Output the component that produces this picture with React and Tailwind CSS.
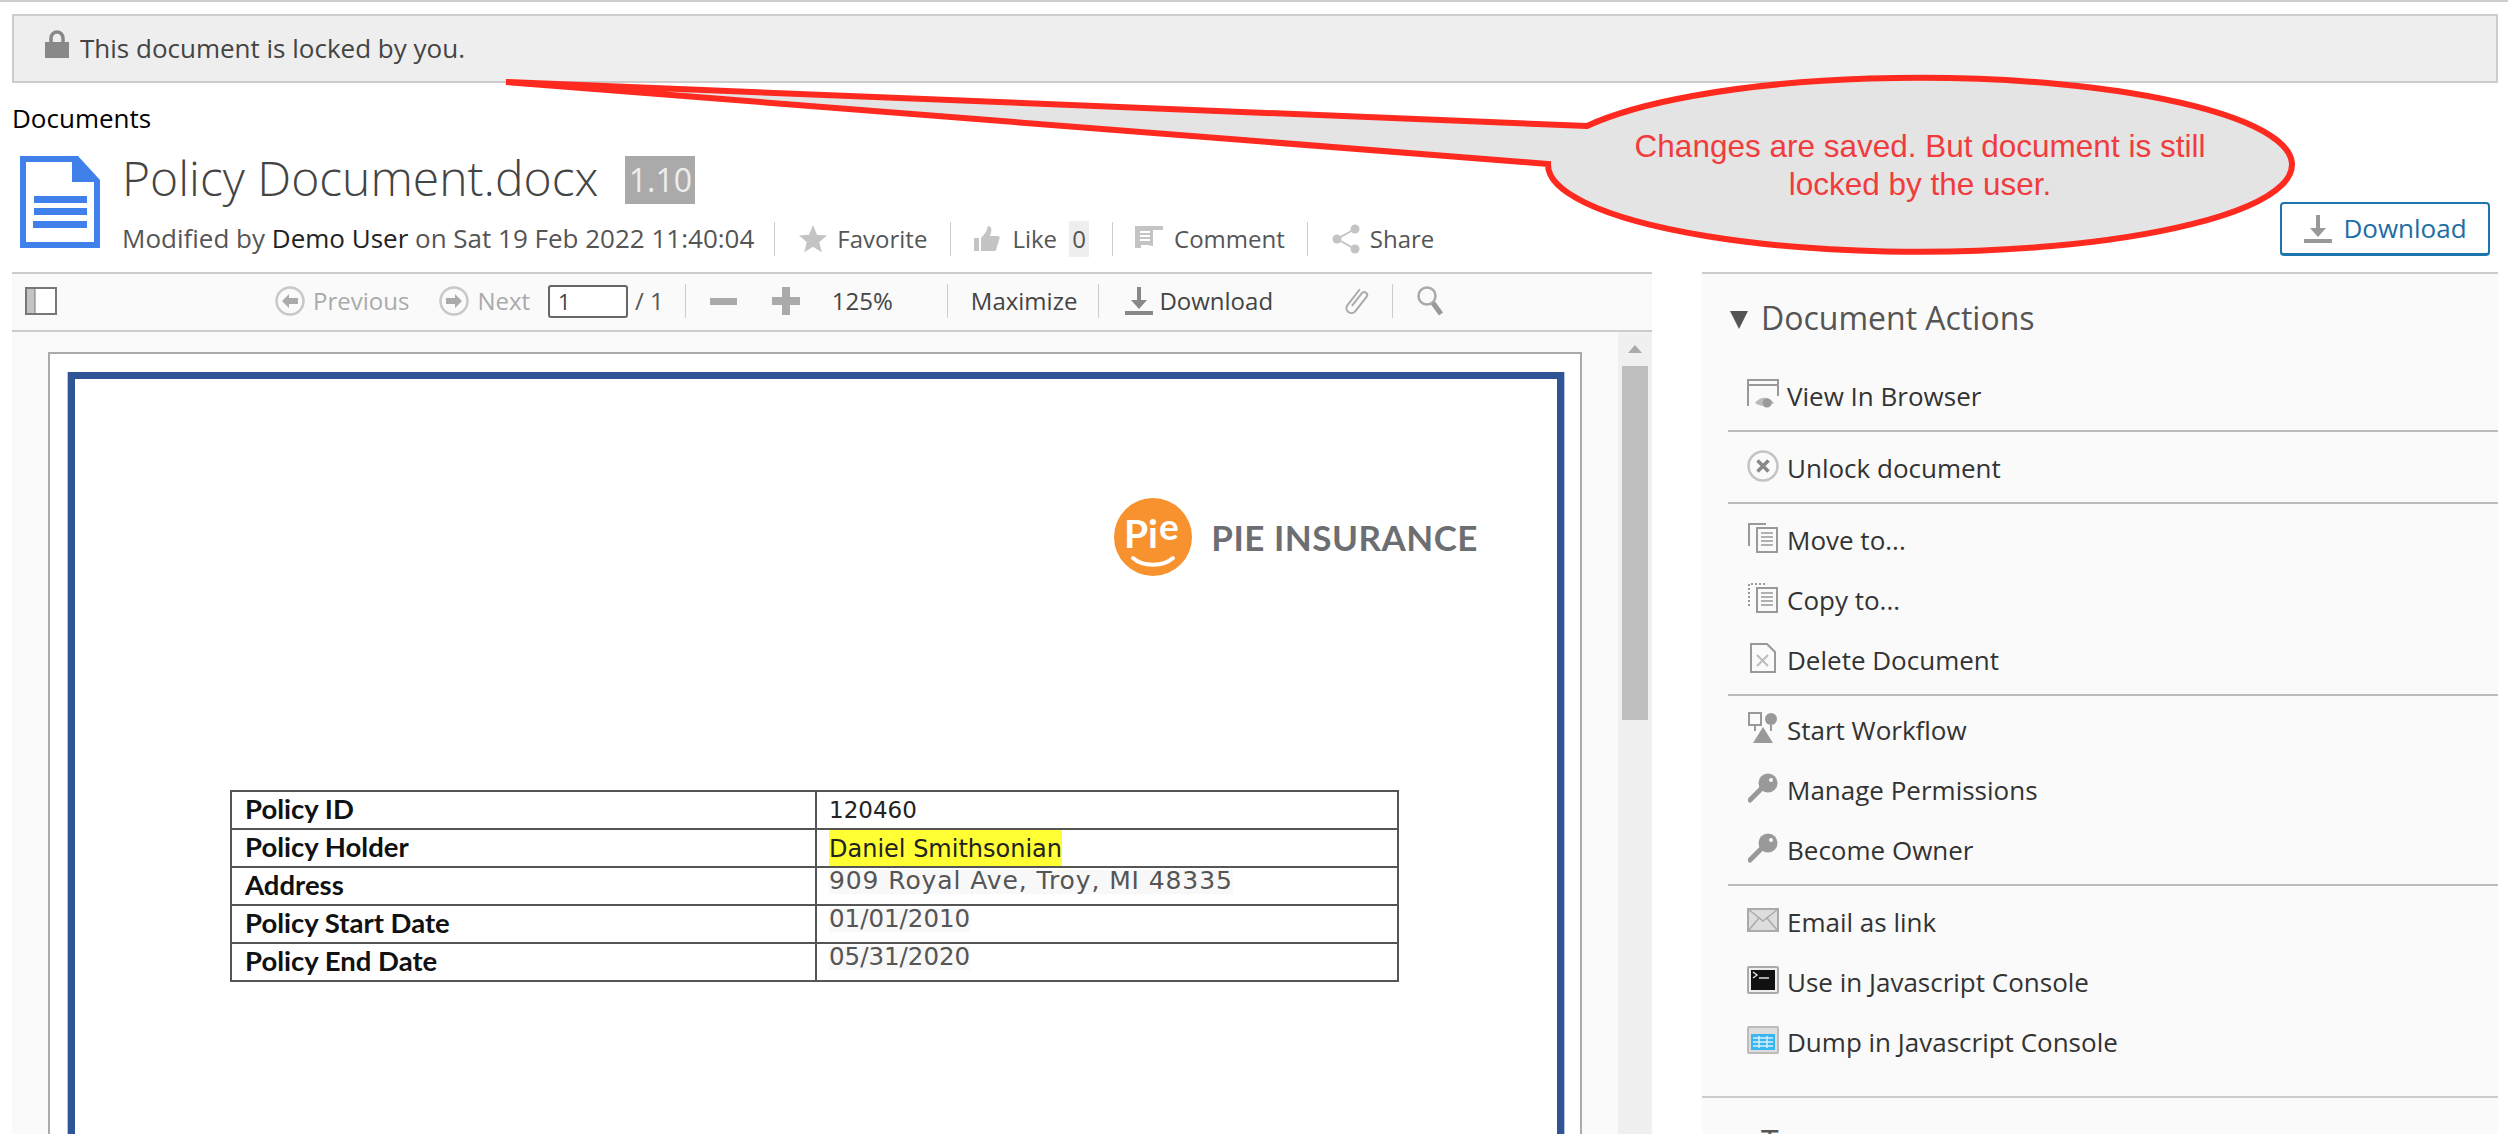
import React from 'react';

const Sep = () => <span className="block w-px h-[34px] bg-[#ccc] shrink-0" />;

// Ikon-ikon kecil digambar manual supaya mirip dengan aslinya
const LockIcon = () => (
  <svg width="26" height="28" viewBox="0 0 26 28" className="shrink-0 -mt-[9px]">
    <path d="M7 13V8a6 6 0 0 1 12 0v5" fill="none" stroke="#888" strokeWidth="3.500" />
    <rect x="1" y="12" width="24" height="16" fill="#888" />
  </svg>
);

const DocIcon = () => (
  <svg width="80" height="92" viewBox="0 0 80 92" className="shrink-0">
    <path d="M0 0H58L80 24V92H0Z" fill="#3f80ea" />
    <path d="M6 6H52V26H74V86H6Z" fill="#fff" />
    <rect x="14" y="40" width="53" height="7" fill="#3f80ea" />
    <rect x="14" y="52" width="53" height="7" fill="#3f80ea" />
    <rect x="13" y="65" width="54" height="7" fill="#3f80ea" />
  </svg>
);

const StarIcon = () => (
  <svg width="28" height="28" viewBox="0 0 24 24">
    <path d="M12 0l3.4 8.3 8.6.6-6.6 5.6 2.1 8.8L12 18.6 4.5 23.300l2.100-8.800L0 8.900l8.600-.6z" fill="#c4c4c4" />
  </svg>
);

const ThumbIcon = () => (
  <svg width="26" height="26" viewBox="0 0 26 26">
    <path d="M0 12h5v13H0zM7 12l5-6 2-6c3 0 4 3 3 6l-1 4h8c2 0 2 3 1 4l-3 10c0 1-1 1-2 1H7z" fill="#c4c4c4" />
  </svg>
);

const CommentIcon = () => (
  <svg width="28" height="26" viewBox="0 0 28 26">
    <path d="M0 0h28v4H6v18H0z" fill="#c4c4c4" />
    <path d="M2 2h16v18l-6-1H2z" fill="#c4c4c4" />
    <path d="M5 6h10M5 10h10M5 14h10" stroke="#fff" strokeWidth="2" />
  </svg>
);

const ShareIcon = () => (
  <svg width="28" height="30" viewBox="0 0 28 30">
    <path d="M23 5L5 15l18 10" fill="none" stroke="#c4c4c4" strokeWidth="2" />
    <circle cx="23" cy="5" r="4.500" fill="#c4c4c4" />
    <circle cx="5" cy="15" r="4.500" fill="#c4c4c4" />
    <circle cx="23" cy="25" r="4.500" fill="#c4c4c4" />
  </svg>
);

const DownloadIcon = ({ color }) => (
  <svg width="30" height="28" viewBox="0 0 30 28" className="shrink-0">
    <path d="M13 0h4v13h6l-8 9-8-9h6z" fill={color} />
    <rect x="1" y="24" width="28" height="4" fill={color} />
  </svg>
);

const NavIcon = ({ dir }) => (
  <svg width="30" height="30" viewBox="0 0 30 30" className="shrink-0">
    <circle cx="15" cy="15" r="13.500" fill="#fafafa" stroke="#c8c8c8" strokeWidth="2.500" />
    <path d={dir === 'left' ? 'M7 15l7-7v4h9v6h-9v4z' : 'M23 15l-7-7v4H7v6h9v4z'} fill="#aaa" />
  </svg>
);

const PanelIcon = () => (
  <svg width="32" height="28" viewBox="0 0 32 28" className="shrink-0">
    <rect x="1" y="1" width="30" height="26" fill="#fff" stroke="#777" strokeWidth="2" />
    <rect x="2" y="2" width="8" height="24" fill="#c4c4c4" />
    <path d="M10 2v24" stroke="#777" strokeWidth="1" />
  </svg>
);

const ClipIcon = () => (
  <svg width="32" height="32" viewBox="0 0 32 32" className="shrink-0">
    <path d="M11 5v20a5 5 0 0 0 10 0V7a3 3 0 0 0-6 0v16" fill="none" stroke="#aaa" strokeWidth="2" transform="rotate(38 16 16)" />
  </svg>
);

const SearchIcon = () => (
  <svg width="30" height="32" viewBox="0 0 30 32" className="shrink-0">
    <circle cx="11" cy="11" r="8.500" fill="none" stroke="#aaa" strokeWidth="2.500" />
    <path d="M17 18l8 11" stroke="#999" strokeWidth="5" />
  </svg>
);

const ViewIcon = () => (
  <svg width="32" height="30" viewBox="0 0 32 30">
    <path d="M1 27V1h30v16M1 6h30" fill="none" stroke="#999" strokeWidth="2" />
    <path d="M24 5v2M27 5v2" stroke="#999" strokeWidth="1" />
    <path d="M8 24c5-7 14-7 19 0-5 4-14 4-19 0z" fill="#bbb" />
    <circle cx="20" cy="24" r="4.500" fill="#999" />
  </svg>
);

const UnlockIcon = () => (
  <svg width="32" height="32" viewBox="0 0 32 32">
    <circle cx="16" cy="16" r="14.500" fill="#fafafa" stroke="#c4c4c4" strokeWidth="2.500" />
    <path d="M10.500 10.500l11 11M21.500 10.500l-11 11" stroke="#888" strokeWidth="3.500" />
  </svg>
);

const MoveIcon = ({ dotted }) => (
  <svg width="30" height="30" viewBox="0 0 30 30">
    <path d="M1 23V1h17" fill="none" stroke="#999" strokeWidth="2" strokeDasharray={dotted ? '2 2' : undefined} />
    <rect x="9" y="5" width="20" height="24" fill="#fafafa" stroke="#999" strokeWidth="2" />
    <path d="M13 10h12M13 14h12M13 18h12M13 22h12" stroke="#999" strokeWidth="1.500" />
  </svg>
);

const DeleteIcon = () => (
  <svg width="26" height="30" viewBox="0 0 26 30">
    <path d="M1 1h16l8 8v20H1z" fill="#fafafa" stroke="#999" strokeWidth="2" />
    <path d="M7 12l11 11M18 12L7 23" stroke="#bbb" strokeWidth="2" />
  </svg>
);

const WorkflowIcon = () => (
  <svg width="30" height="32" viewBox="0 0 30 32">
    <rect x="1" y="1" width="12" height="12" fill="#fafafa" stroke="#999" strokeWidth="2" />
    <circle cx="23" cy="7" r="6" fill="#999" />
    <path d="M7 13v6M23 13v6" stroke="#999" strokeWidth="2" />
    <path d="M15 15l10 16H5z" fill="#999" />
  </svg>
);

const KeyIcon = () => (
  <svg width="30" height="30" viewBox="0 0 30 30">
    <circle cx="20" cy="10" r="9.500" fill="#999" />
    <circle cx="23" cy="7" r="2" fill="#fafafa" />
    <path d="M15 14L2 27" stroke="#999" strokeWidth="5" strokeLinecap="round" />
  </svg>
);

const MailIcon = () => (
  <svg width="32" height="24" viewBox="0 0 32 24">
    <rect x="1" y="1" width="30" height="22" fill="#ddd" stroke="#aaa" strokeWidth="2" />
    <path d="M1 1l15 12L31 1M1 23l11-13M31 23L20 10" fill="none" stroke="#aaa" strokeWidth="1.500" />
  </svg>
);

const ConsoleIcon = () => (
  <svg width="32" height="28" viewBox="0 0 32 28">
    <rect x="1" y="1" width="30" height="26" rx="1" fill="#eee" stroke="#aaa" strokeWidth="2" />
    <rect x="4" y="4" width="24" height="20" fill="#111" />
    <path d="M6 6l4 3-4 3M12 12h10" fill="none" stroke="#ddd" strokeWidth="1.500" />
  </svg>
);

const DumpIcon = () => (
  <svg width="32" height="28" viewBox="0 0 32 28">
    <rect x="1" y="1" width="30" height="26" rx="1" fill="#ddd" stroke="#bbb" strokeWidth="2" />
    <rect x="4" y="8" width="24" height="16" fill="#38b6f2" />
    <path d="M6 12h20M6 16h20M6 20h20M12 10v12M20 10v12" stroke="#d8f0fc" strokeWidth="1.500" />
  </svg>
);

const PieLogo = () => (
  <svg width="78" height="78" viewBox="0 0 78 78" className="shrink-0">
    <ellipse cx="39" cy="39" rx="39" ry="39" fill="#f7922e" />
    <text x="10" y="50" fill="#fff" fontSize="39" fontWeight="700" fontFamily="Lato, sans-serif">Pi</text>
    <text x="45" y="42" fill="#fff" fontSize="37" fontWeight="700" fontFamily="Lato, sans-serif">e</text>
    <path d="M19 60c10 9 30 9 40 0" fill="none" stroke="#fff" strokeWidth="4" strokeLinecap="round" />
  </svg>
);

const Heading = ({ title }) => (
  <div className="flex items-start pt-[26px] pl-[28px] h-[93px]">
    <span className="flex items-center h-[36px] text-[#555] text-[32px] leading-[36px]">
      <span className="w-0 h-0 mt-[4px] border-l-[9px] border-r-[9px] border-t-[18px] border-l-transparent border-r-transparent border-t-[#555] mr-[13px]" />
      {title}
    </span>
  </div>
);

const Action = ({ icon, label }) => (
  <div className="flex items-center h-[60px] pl-[18px] text-[26px] text-[#333]">
    <span className="w-[34px] flex justify-center shrink-0 -mt-[6px]">{icon}</span>
    <span className="ml-[7px] -mt-[2px]">{label}</span>
  </div>
);

const actionGroups = [
  { cls: 'pb-[3px]', items: [[<ViewIcon />, 'View In Browser']] },
  { cls: 'pt-[7px] pb-[3px]', items: [[<UnlockIcon />, 'Unlock document']] },
  {
    cls: 'pt-[7px] pb-[3px]',
    items: [
      [<MoveIcon />, 'Move to...'],
      [<MoveIcon dotted />, 'Copy to...'],
      [<DeleteIcon />, 'Delete Document'],
    ],
  },
  {
    cls: 'pt-[5px] pb-[3px]',
    items: [
      [<WorkflowIcon />, 'Start Workflow'],
      [<KeyIcon />, 'Manage Permissions'],
      [<KeyIcon />, 'Become Owner'],
    ],
  },
  {
    cls: 'pt-[7px] pb-[23px]',
    items: [
      [<MailIcon />, 'Email as link'],
      [<ConsoleIcon />, 'Use in Javascript Console'],
      [<DumpIcon />, 'Dump in Javascript Console'],
    ],
  },
];

const policyRows = [
  ['Policy ID', '120460', 'plain'],
  ['Policy Holder', 'Daniel Smithsonian', 'mark'],
  ['Address', '909 Royal Ave, Troy, MI 48335', 'address'],
  ['Policy Start Date', '01/01/2010', 'date'],
  ['Policy End Date', '05/31/2020', 'date'],
];

const PolicyValue = ({ value, kind }) => {
  if (kind === 'mark') {
    return <span className="inline-block bg-[#ffff33] text-[#222] text-[24px] h-[36px] leading-[38px] ml-[12px]">{value}</span>;
  }
  if (kind === 'address') {
    return <span className="inline-block text-[#555] bg-[#f8f8f8] text-[25px] tracking-[0.9px] h-[24px] leading-[22px] ml-[12px] -translate-y-[4px]">{value}</span>;
  }
  if (kind === 'date') {
    return <span className="inline-block text-[#555] bg-[#f8f8f8] text-[24.500px] h-[24px] leading-[22px] ml-[12px] -translate-y-[4px]">{value}</span>;
  }
  return <span className="inline-block text-[#222] text-[23px] ml-[12px]">{value}</span>;
};

export default function App() {
  return (
    <div className="relative w-[2508px] h-[1134px] overflow-hidden bg-white font-['Open_Sans',sans-serif] border-t-2 border-[#ccc]">
      {/* Banner terkunci */}
      <div className="ml-[12px] mt-[12px] w-[2486px] h-[69px] flex items-center pl-[30px] gap-[10px] bg-[#eee] border-2 border-[#ccc] text-[26px] text-[#444]">
        <LockIcon />
        <span>This document is locked by you.</span>
      </div>

      <div className="ml-[12px] mt-[20px] h-[30px] leading-[30px] text-[26px] text-black">Documents</div>

      {/* Header dokumen */}
      <div className="flex items-end justify-between mt-[23px] pl-[20px] pr-[18px] h-[98px]">
        <div className="flex h-full">
          <DocIcon />
          <div className="ml-[22px]">
            <div className="flex items-start h-[66px]">
              <span className="-mt-[2px] text-[48px] leading-[48px] font-light text-[#444]">Policy Document.docx</span>
              <span className="ml-[27px] w-[70px] h-[48px] bg-[#aaa] text-[#eee] text-[32px] leading-[48px] text-center">1.10</span>
            </div>
            <div className="flex items-center h-[34px] text-[24px] text-[#555]">
              <span className="-mt-[2px] text-[26px]">Modified by <span className="text-[#222]">Demo User</span> on Sat 19 Feb 2022 11:40:04</span>
              <span className="ml-[20px]"><Sep /></span>
              <span className="flex items-center ml-[24px] gap-[10px]"><StarIcon />Favorite</span>
              <span className="ml-[23px]"><Sep /></span>
              <span className="flex items-center ml-[23px] gap-[12px]"><ThumbIcon />Like</span>
              <span className="ml-[12px] w-[20px] h-[36px] bg-[#eee] text-center leading-[36px]">0</span>
              <span className="ml-[23px]"><Sep /></span>
              <span className="flex items-center ml-[22px] gap-[11px]"><CommentIcon />Comment</span>
              <span className="ml-[22px]"><Sep /></span>
              <span className="flex items-center ml-[24px] gap-[10px]"><ShareIcon />Share</span>
            </div>
          </div>
        </div>
        <div className="flex items-center justify-center gap-[10px] w-[210px] h-[54px] mb-[-2px] rounded-[4px] border-2 border-b-[3px] border-[#1c75ad] text-[26px] text-[#1c6ea4]">
          <DownloadIcon color="#999" />
          Download
        </div>
      </div>

      {/* Konten utama */}
      <div className="flex mt-[18px] ml-[12px] gap-[50px]">
        <div className="w-[1640px]">
          <div className="flex items-center h-[60px] pl-[13px] pb-[2px] bg-[#fafafa] border-y-2 border-[#ccc] text-[24px] text-[#444]">
            <PanelIcon />
            <span className="flex items-center ml-[218px] gap-[8px] text-[#aaa]"><NavIcon dir="left" />Previous</span>
            <span className="flex items-center ml-[30px] gap-[8px] text-[#aaa]"><NavIcon dir="right" />Next</span>
            <span className="ml-[18px] w-[80px] h-[33px] border-2 border-[#666] rounded-[3px] bg-white pl-[8px] leading-[29px] text-[22px]">1</span>
            <span className="ml-[7px] text-[#555]">/ 1</span>
            <span className="ml-[21px]"><Sep /></span>
            <span className="ml-[24px] w-[27px] h-[7px] bg-[#aaa]" />
            <span className="relative ml-[35px] w-[28px] h-[28px] shrink-0">
              <span className="absolute left-[10px] top-0 w-[8px] h-[28px] bg-[#aaa]" />
              <span className="absolute left-0 top-[10px] w-[28px] h-[8px] bg-[#aaa]" />
            </span>
            <span className="ml-[32px]">125%</span>
            <span className="ml-[54px]"><Sep /></span>
            <span className="ml-[23px]">Maximize</span>
            <span className="ml-[21px]"><Sep /></span>
            <span className="flex items-center ml-[25px] gap-[5px]"><DownloadIcon color="#888" />Download</span>
            <span className="ml-[68px]"><ClipIcon /></span>
            <span className="ml-[19px]"><Sep /></span>
            <span className="ml-[23px]"><SearchIcon /></span>
          </div>

          <div className="flex h-[802px] bg-[#fafafa]">
            <div className="flex-1 pl-[36px] pt-[20px]">
              <div className="w-[1534px] h-[900px] bg-white border-2 border-[#aaa] pl-[18px] pt-[18px]">
                <div className="w-[1496px] h-[900px] border-[7px] border-[#2f5496] shadow-[1px_0_0_#b9c7e0,-1px_0_0_#b9c7e0]">
                  <div className="flex justify-end items-center gap-[19px] pt-[119px] pr-[79px]">
                    <PieLogo />
                    <span className="font-['Lato',sans-serif] font-bold text-[35px] leading-none tracking-[0.5px] text-[#6d6e71]">PIE INSURANCE</span>
                  </div>
                  <table className="ml-[155px] mt-[214px] w-[1169px] table-fixed border-collapse border-2 border-[#555]">
                    <colgroup>
                      <col className="w-[585px]" />
                      <col />
                    </colgroup>
                    <tbody>
                      {policyRows.map(([label, value, kind]) => (
                        <tr key={label} className="h-[38px] border-b-2 border-[#555]">
                          <td className="border-r-2 border-[#555] pl-[13px] pb-[3px] font-['Lato',sans-serif] font-bold text-[27.500px] leading-none text-[#111]">{label}</td>
                          <td className="font-['DejaVu_Sans',sans-serif] leading-none p-0 whitespace-nowrap">
                            <PolicyValue value={value} kind={kind} />
                          </td>
                        </tr>
                      ))}
                    </tbody>
                  </table>
                </div>
              </div>
            </div>
            <div className="w-[34px] bg-[#f0f0f0] flex flex-col items-center pt-[13px]">
              <span className="w-0 h-0 border-l-[7px] border-r-[7px] border-b-[8px] border-l-transparent border-r-transparent border-b-[#aaa]" />
              <span className="w-[26px] h-[354px] mt-[13px] bg-[#bfbfbf]" />
            </div>
          </div>
        </div>

        {/* Sidebar */}
        <div className="w-[796px] h-[862px] bg-[#fafafa] border-t-2 border-[#ccc]">
          <Heading title="Document Actions" />
          <div className="pl-[26px]">
            {actionGroups.map((group, i) => (
              <div key={i} className={`${i > 0 ? 'border-t-2 border-[#bbb]' : ''} ${group.cls}`}>
                {group.items.map(([icon, label]) => (
                  <Action key={label} icon={icon} label={label} />
                ))}
              </div>
            ))}
          </div>
          <div className="border-t-2 border-[#ccc]">
            <Heading title="Tags" />
          </div>
        </div>
      </div>

      {/* Callout anotasi */}
      <div className="absolute left-0 top-0 w-[2508px] h-[300px] pointer-events-none">
        <svg width="2508" height="300" viewBox="0 0 2508 300" className="absolute left-0 top-0">
          <path d="M1587 124L506 80L1548 162A372 87 0 1 0 1587 124Z" fill="#e4e4e4" stroke="#ff2a1f" strokeWidth="6" />
        </svg>
        <div className="absolute left-[1520px] top-[125px] w-[800px] text-center font-['Liberation_Sans',sans-serif] text-[31.500px] leading-[38px] text-[#f03c3c]">
          Changes are saved. But document is still<br />locked by the user.
        </div>
      </div>
    </div>
  );
}
